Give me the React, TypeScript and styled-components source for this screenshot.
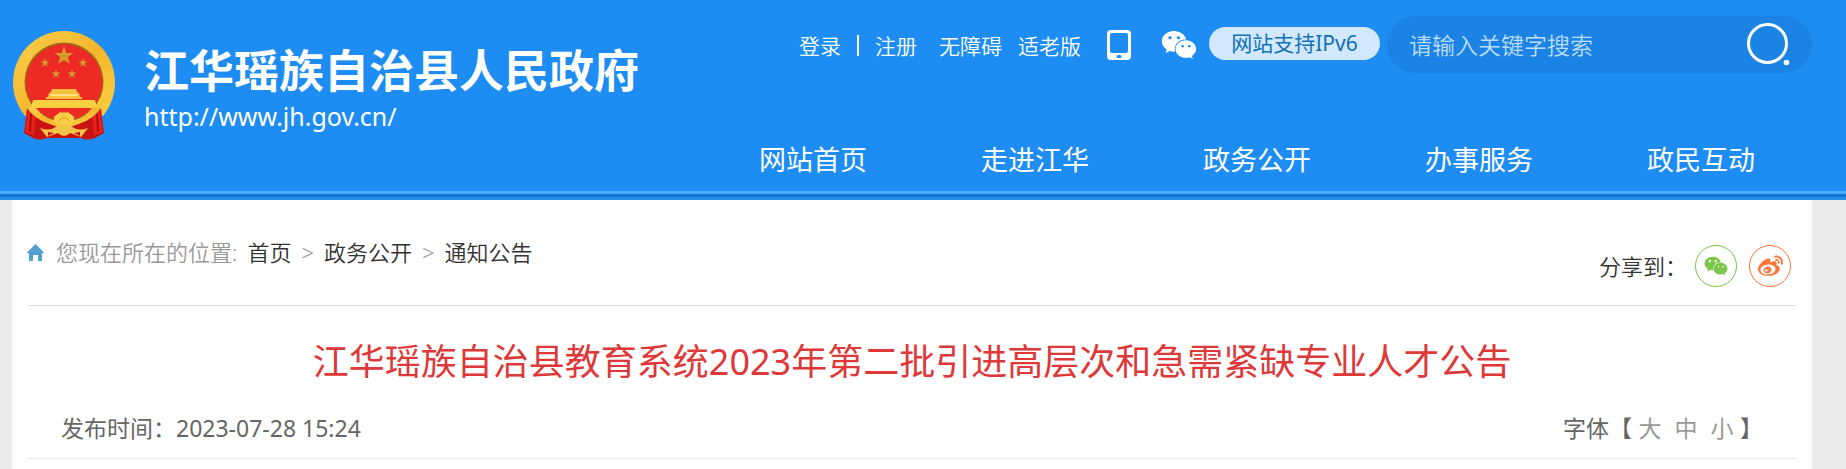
import React from "react";
import styled, { createGlobalStyle } from "styled-components";
import { FaWeibo, FaWeixin } from "react-icons/fa";

const GlobalStyle = createGlobalStyle`
  *, *::before, *::after { box-sizing: border-box; }
  body {
    margin: 0;
    background: #ececec;
    font-family: "Noto Sans", "Noto Sans CJK SC", sans-serif;
    font-weight: 350;
    color: #333;
  }
  a { color: inherit; text-decoration: none; }
  button, input { font: inherit; color: inherit; border: 0; background: none; padding: 0; margin: 0; }
  button { cursor: pointer; }
`;

const Header = styled.header`
  background: #1d8cf3;
  color: #fff;
`;

const HeaderInner = styled.div`
  display: flex;
  justify-content: space-between;
  align-items: flex-start;
  padding: 16px 34px 13px 12px;
`;

const HeaderStripes = styled.div`
  height: 9px;
  background: linear-gradient(#4caefc 0 3px, #1473d6 3px 6px, #228fe8 6px 9px);
`;

const Brand = styled.a`
  display: flex;
  gap: 28px;
  padding-top: 15px;
`;

const BrandText = styled.div`
  padding-top: 10px;
`;

const SiteName = styled.h1`
  margin: 0;
  font-size: 45px;
  line-height: 60px;
  font-weight: 700;
  white-space: nowrap;
`;

const SiteUrl = styled.div`
  font-size: 25px;
  line-height: 30px;
  font-weight: 400;
`;

const HeaderRight = styled.div`
  flex: 0 1 1110px;
  display: flex;
  flex-direction: column;
  gap: 68px;
`;

const Tools = styled.div`
  display: flex;
  justify-content: flex-end;
  align-items: center;
  height: 57px;
`;

const ToolLinks = styled.div`
  display: flex;
  align-items: center;
  gap: 16px;
  padding-top: 2px;
  font-size: 21px;
  line-height: 28px;
  white-space: nowrap;
`;

const LinkDivider = styled.span`
  width: 2px;
  height: 21px;
  background: #fff;
`;

const AccessLinks = styled(ToolLinks)`
  margin: 0 26px 0 22px;
`;

const IconLinks = styled.div`
  display: flex;
  align-items: center;
  gap: 30px;
  margin-right: 12px;
  svg { display: block; }
`;

const Ipv6Badge = styled.a`
  flex: none;
  width: 171px;
  margin: 0 7px 2px 0;
  border-radius: 17px;
  background: #d1e8fe;
  color: #1272b5;
  font-size: 21px;
  font-weight: 400;
  line-height: 33px;
  text-align: center;
`;

const SearchForm = styled.form`
  flex: 0 1 425px;
  display: flex;
  align-items: center;
  height: 57px;
  padding: 0 22px;
  border-radius: 29px;
  background: #1b83e3;
`;

const SearchInput = styled.input`
  flex: 1;
  min-width: 0;
  font-size: 23px;
  line-height: 32px;
  outline: none;
  &::placeholder { color: #bbdcfa; opacity: 1; }
`;

const SearchButton = styled.button`
  svg { display: block; }
`;

const Nav = styled.nav`
  display: flex;
  font-size: 27px;
  line-height: 37px;
`;

const NavLink = styled.a`
  flex: 1;
  text-align: center;
  font-weight: 400;
`;

const Page = styled.main`
  margin: 0 34px 0 12px;
  padding: 0 15px 10px;
  background: #fff;
`;

const LocationBar = styled.div`
  display: flex;
  justify-content: space-between;
  padding: 36px 6px 18px 0;
  border-bottom: 1px solid #dfdfdf;
`;

const Breadcrumb = styled.nav`
  display: flex;
  align-items: center;
  gap: 10px;
  height: 32px;
  font-size: 22px;
  line-height: 32px;
  color: #999;
  a { color: #333; }
`;

const BreadcrumbLabel = styled.span`
  margin-left: 2px;
`;

const Share = styled.div`
  display: flex;
  align-items: center;
  gap: 8px;
  padding-top: 9px;
  font-size: 22px;
  line-height: 32px;
`;

const ShareButtons = styled.div`
  display: flex;
  gap: 12px;
`;

const ShareButton = styled.button<{ $tone: string }>`
  display: flex;
  align-items: center;
  justify-content: center;
  width: 42px;
  height: 42px;
  border: 1px solid ${(p) => p.$tone};
  border-radius: 50%;
  color: ${(p) => p.$tone};
`;

const ArticleTitle = styled.h2`
  margin: 0;
  padding: 30px 0 26px;
  color: #de3838;
  font-size: 36px;
  line-height: 52px;
  font-weight: 400;
  text-align: center;
`;

const ArticleMeta = styled.div`
  display: flex;
  justify-content: space-between;
  padding: 0 34px 16px;
  border-bottom: 1px solid #ebebeb;
  color: #666;
  font-size: 23px;
  font-weight: 400;
  line-height: 28px;
`;

const FontSizes = styled.div`
  display: flex;
`;

const SizeButton = styled.button`
  width: 36px;
  color: #999;
`;

const STAR = "0,-10 2.3,-3.1 9.5,-3.1 3.7,1.2 5.9,8.1 0,3.9 -5.9,8.1 -3.7,1.2 -9.5,-3.1 -2.3,-3.1";

const Emblem = () => (
  <svg width="104" height="110" viewBox="0 0 104 110" aria-hidden="true">
    <defs>
      <linearGradient id="gold" x1="0" y1="0" x2="1" y2="1">
        <stop offset="0" stopColor="#fbd04b" />
        <stop offset="0.5" stopColor="#f3b62b" />
        <stop offset="1" stopColor="#fcd548" />
      </linearGradient>
    </defs>
    <ellipse cx="52" cy="51.500" rx="51" ry="51.500" fill="url(#gold)" />
    <circle cx="52" cy="51" r="39.500" fill="#a86018" />
    <circle cx="52" cy="51.500" r="38" fill="#ee2a24" />
    <g fill="#d49a2c">
      <polygon points={STAR} transform="translate(52 25)" />
      <polygon points={STAR} transform="translate(33 32) scale(0.48)" />
      <polygon points={STAR} transform="translate(71 32) scale(0.48)" />
      <polygon points={STAR} transform="translate(44 43) scale(0.48)" />
      <polygon points={STAR} transform="translate(60 43) scale(0.48)" />
    </g>
    <path d="M40 58h24l1 3 2 1 1 4h2v2H34v-2h2l1-4 2-1z" fill="#f6c23c" />
    <path d="M38 63h28v2H38z" fill="#ffe08a" />
    <path d="M21 69h62l2 8H19z" fill="#fbd13f" />
    <path d="M15 77q4 4 9 5q10 12 28 12t28-12q5-1 9-5l3 25-9 5q-8 3-14 0H35q-8 3-14 0l-9-5z" fill="#c91313" />
    <path d="M16 78l8 6-2 20-9-3zM88 78l-8 6 2 20 9-3z" fill="#e8231f" />
    <path d="M19 83l-1 18M85 83l1 18" fill="none" stroke="#b00f0f" strokeWidth="2" />
    <path d="M15 77l8-1q11 14 23 15h12q12-1 23-15l8 1q-8 11-20 15l-8 3H43l-8-3Q23 88 15 77z" fill="url(#gold)" />
    <path d="M30 92q10 5 22 5t22-5l-4 6H34z" fill="#c91313" />
    <path d="M28 97q8 3 14 0l4-3h12l4 3q6 3 14 0l-7 9-11-4q-3 3-6 3t-6-3l-11 4z" fill="#f4c44a" />
    <path d="M36 101l6 1-6 3zM68 101l-6 1 6 3z" fill="#c81414" />
    <path d="M42 91v-5l2-2 2-1 2-2 3 1 1-2 1 2 3-1 2 2 2 1 2 2v5l-5 3H47z" fill="#fbcf45" />
    <path d="M46 90q6-6 12 0" fill="none" stroke="#dd9a26" strokeWidth="1" />
  </svg>
);

const PhoneIcon = () => (
  <svg width="24" height="30" viewBox="0 0 24 30" aria-hidden="true">
    <path
      fill="#fff"
      fillRule="evenodd"
      d="M4 0h16a4 4 0 0 1 4 4v22a4 4 0 0 1-4 4H4a4 4 0 0 1-4-4V4a4 4 0 0 1 4-4zm1 3a2 2 0 0 0-2 2v16a2 2 0 0 0 2 2h14a2 2 0 0 0 2-2V5a2 2 0 0 0-2-2zm6 22a1.500 1.500 0 0 0 0 3h2a1.500 1.500 0 0 0 0-3z"
    />
  </svg>
);

const SearchIcon = () => (
  <svg width="43" height="43" viewBox="0 0 43 43" aria-hidden="true">
    <circle cx="20.500" cy="20.500" r="19" fill="none" stroke="#fff" strokeWidth="3" />
    <circle cx="39.500" cy="39.500" r="2.800" fill="#fff" />
  </svg>
);

const HomeIcon = () => (
  <svg width="17" height="17" viewBox="0 0 17 17" aria-hidden="true">
    <path d="M8.500 0L17 8.500V9h-2v8h-4v-6H6v6H2V9H0v-.5z" fill="#529fd2" />
  </svg>
);

const NAV_ITEMS = ["网站首页", "走进江华", "政务公开", "办事服务", "政民互动"];

export default function App() {
  return (
    <>
      <GlobalStyle />
      <Header>
        <HeaderInner>
          <Brand href="#">
            <Emblem />
            <BrandText>
              <SiteName>江华瑶族自治县人民政府</SiteName>
              <SiteUrl>http://www.jh.gov.cn/</SiteUrl>
            </BrandText>
          </Brand>
          <HeaderRight>
            <Tools>
              <ToolLinks>
                <a href="#">登录</a>
                <LinkDivider />
                <a href="#">注册</a>
              </ToolLinks>
              <AccessLinks>
                <a href="#">无障碍</a>
                <a href="#">适老版</a>
              </AccessLinks>
              <IconLinks>
                <a href="#" aria-label="手机版"><PhoneIcon /></a>
                <a href="#" aria-label="微信"><FaWeixin size={36} /></a>
              </IconLinks>
              <Ipv6Badge href="#">网站支持IPv6</Ipv6Badge>
              <SearchForm role="search" onSubmit={(e) => e.preventDefault()}>
                <SearchInput aria-label="搜索" placeholder="请输入关键字搜索" />
                <SearchButton type="submit" aria-label="搜索"><SearchIcon /></SearchButton>
              </SearchForm>
            </Tools>
            <Nav>
              {NAV_ITEMS.map((item) => (
                <NavLink key={item} href="#">{item}</NavLink>
              ))}
            </Nav>
          </HeaderRight>
        </HeaderInner>
        <HeaderStripes />
      </Header>
      <Page>
        <LocationBar>
          <Breadcrumb>
            <HomeIcon />
            <BreadcrumbLabel>您现在所在的位置:</BreadcrumbLabel>
            <a href="#">首页</a>
            <span>&gt;</span>
            <a href="#">政务公开</a>
            <span>&gt;</span>
            <a href="#">通知公告</a>
          </Breadcrumb>
          <Share>
            <span>分享到：</span>
            <ShareButtons>
              <ShareButton $tone="#7bc549" aria-label="分享到微信"><FaWeixin size={24} /></ShareButton>
              <ShareButton $tone="#ff763b" aria-label="分享到微博"><FaWeibo size={25} /></ShareButton>
            </ShareButtons>
          </Share>
        </LocationBar>
        <ArticleTitle>江华瑶族自治县教育系统2023年第二批引进高层次和急需紧缺专业人才公告</ArticleTitle>
        <ArticleMeta>
          <span>发布时间：2023-07-28 15:24</span>
          <FontSizes>
            <span>字体【</span>
            <SizeButton>大</SizeButton>
            <SizeButton>中</SizeButton>
            <SizeButton>小</SizeButton>
            <span>】</span>
          </FontSizes>
        </ArticleMeta>
      </Page>
    </>
  );
}
